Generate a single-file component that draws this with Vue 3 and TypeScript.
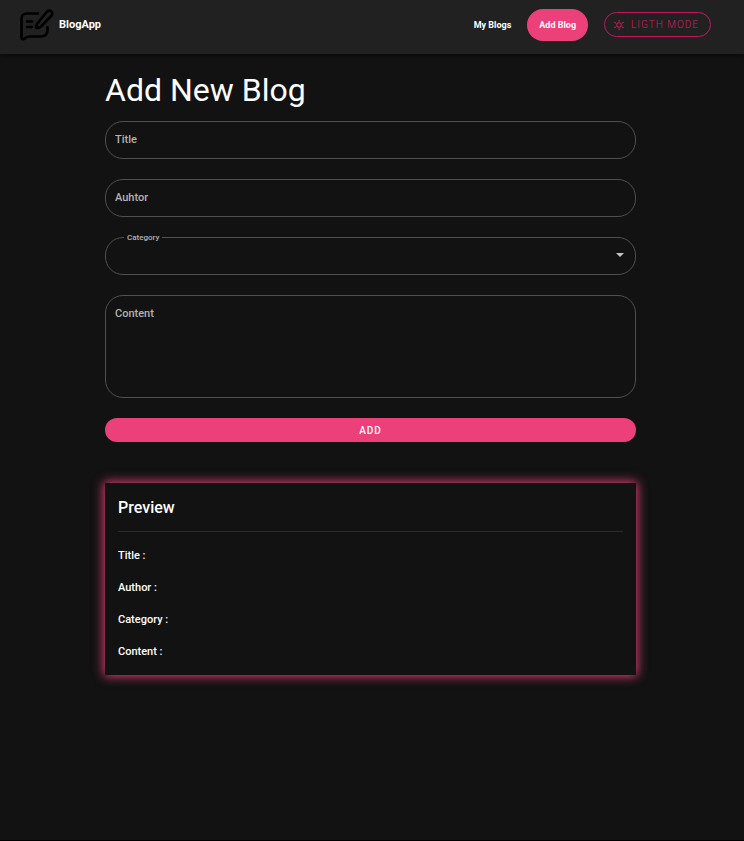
<script setup lang="ts">
import { reactive } from 'vue'

interface Blog {
  title: string
  author: string
  category: string
  content: string
}

const blog = reactive<Blog>({ title: '', author: '', category: '', content: '' })
</script>

<template>
  <div class="page">
    <header class="toolbar">
      <a class="brand" href="#">
        <svg class="logo" viewBox="0 0 36 34" aria-hidden="true">
          <path d="M19 5.500H8.500Q2.500 5.500 2.500 11V29.500Q2.500 31.200 4.200 31.200Q5 31.200 6 30.300Q8 28.500 10.500 28.500H22Q28.500 28.500 28.500 22V19" />
          <path d="M18 16L28.300 3.300A3.100 3.100 0 0 1 33 7L22 18.500Q20 20.200 17 19.800Q16.600 18 18 16Z" />
          <path d="M8 13.500H13M8 19H13" />
        </svg>
        <span>BlogApp</span>
      </a>
      <nav class="links">
        <a class="link" href="#">My Blogs</a>
        <a class="link active" href="#">Add Blog</a>
        <button class="mode" type="button">
          <svg class="sun" viewBox="0 0 12 12" aria-hidden="true">
            <circle cx="6" cy="6" r="2.300" />
            <path d="M6 1V2.800M6 9.200V11M1.200 3.200L3.300 4.400M8.700 7.600L10.800 8.800M1.200 8.800L3.300 7.600M8.700 4.400L10.800 3.200" />
          </svg>
          <span>LIGTH MODE</span>
        </button>
      </nav>
    </header>

    <main class="content">
      <h1>Add New Blog</h1>
      <form class="form" @submit.prevent>
        <div class="field">
          <label v-show="!blog.title" for="title">Title</label>
          <input id="title" v-model="blog.title" type="text" />
        </div>
        <div class="field">
          <label v-show="!blog.author" for="author">Auhtor</label>
          <input id="author" v-model="blog.author" type="text" />
        </div>
        <div class="field">
          <label class="raised" for="category">Category</label>
          <select id="category" v-model="blog.category">
            <option value=""></option>
          </select>
          <svg class="caret" viewBox="0 0 8 4" aria-hidden="true"><path d="M0 0H8L4 4Z" /></svg>
        </div>
        <div class="field">
          <label v-show="!blog.content" for="content">Content</label>
          <textarea id="content" v-model="blog.content"></textarea>
        </div>
        <button class="submit" type="submit">ADD</button>
      </form>

      <section class="preview">
        <h2>Preview</h2>
        <hr />
        <p>Title : {{ blog.title }}</p>
        <p>Author : {{ blog.author }}</p>
        <p>Category : {{ blog.category }}</p>
        <p>Content : {{ blog.content }}</p>
      </section>
    </main>
  </div>
</template>

<style>
body {
  margin: 0;
  background: #121212;
}
</style>

<style scoped>
* {
  box-sizing: border-box;
}

.page {
  min-height: 100vh;
  background: #121212;
  border-bottom: 1px solid #000;
  color: #fff;
  font-family: Roboto, "Liberation Sans", sans-serif;
}

.toolbar {
  display: flex;
  align-items: center;
  justify-content: space-between;
  height: 54px;
  padding: 0 33px 5px 19px;
  background: #212121;
  box-shadow: 0 2px 4px rgba(0, 0, 0, 0.5);
}

a {
  color: inherit;
  text-decoration: none;
}

.brand {
  display: flex;
  align-items: center;
  gap: 4px;
  font-size: 11px;
  font-weight: 700;
}

.logo {
  width: 36px;
  height: 34px;
  fill: none;
  stroke: #000;
  stroke-width: 2.6;
  stroke-linecap: round;
  stroke-linejoin: round;
}

.links {
  display: flex;
  align-items: center;
  gap: 16px;
  font-size: 9px;
  font-weight: 700;
}

.active {
  padding: 0 12px;
  border-radius: 16px;
  background: #ec407a;
  line-height: 32px;
}

.mode {
  display: flex;
  align-items: center;
  gap: 6px;
  height: 25px;
  padding: 0 11px 0 8px;
  border: 1px solid #c2185b;
  border-radius: 13px;
  background: none;
  color: #d81b60;
  font-family: inherit;
  font-size: 10px;
  font-weight: 300;
  letter-spacing: 1px;
}

.sun {
  width: 12px;
  height: 12px;
  fill: none;
  stroke: currentColor;
}

.content {
  padding: 16px 108px 40px 105px;
}

h1 {
  margin: 0 0 11px;
  font-size: 32px;
  font-weight: 400;
  line-height: 40px;
}

.form {
  display: flex;
  flex-direction: column;
  gap: 20px;
}

.field {
  position: relative;
  display: flex;
}

.field label {
  position: absolute;
  top: 12px;
  left: 10px;
  color: #b4b4b4;
  font-size: 11px;
  font-weight: 500;
  line-height: 14px;
}

.field .raised {
  top: -4px;
  left: 19px;
  padding: 0 3px;
  background: #121212;
  font-size: 8px;
  line-height: 10px;
}

input,
select,
textarea {
  flex: 1;
  min-width: 0;
  height: 38px;
  margin: 0;
  padding: 0 10px;
  border: 1px solid #505050;
  border-radius: 18px;
  background: none;
  color: #fff;
  font-family: inherit;
  font-size: 11px;
  appearance: none;
}

textarea {
  height: 103px;
  padding: 12px 10px;
  resize: none;
}

.caret {
  position: absolute;
  top: 16px;
  right: 12px;
  width: 8px;
  height: 4px;
  fill: #c4c4c4;
  pointer-events: none;
}

.submit {
  height: 24px;
  padding: 0;
  border: 0;
  border-radius: 12px;
  background: #ec407a;
  color: #fff;
  font-family: inherit;
  font-size: 10px;
  font-weight: 500;
  letter-spacing: 1px;
}

.preview {
  margin-top: 41px;
  padding: 14px 13px 15px;
  box-shadow: 0 0 10px 1px #ec407a;
  background: #121212;
}

h2 {
  margin: 0;
  font-size: 16px;
  font-weight: 500;
  line-height: 22px;
}

hr {
  margin: 12px 0 16px;
  border: 0;
  border-top: 1px solid #2b2b2b;
}

p {
  margin: 0;
  font-size: 11px;
  font-weight: 500;
  line-height: 16px;
}

p + p {
  margin-top: 16px;
}
</style>
